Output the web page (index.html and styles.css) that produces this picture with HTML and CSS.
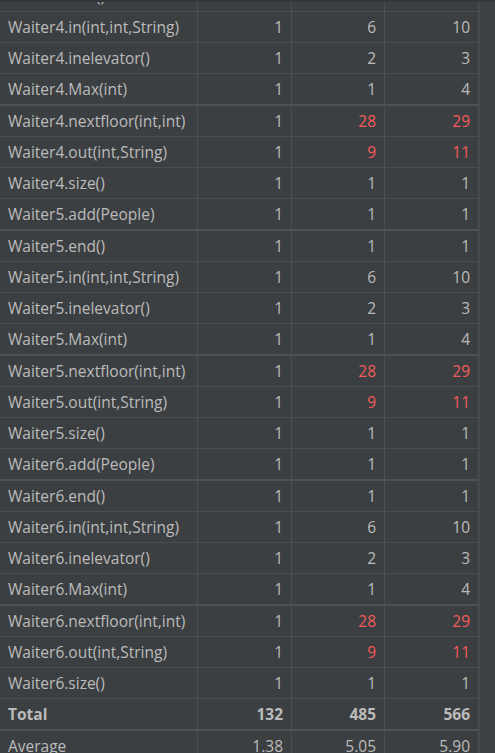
FILE: index.html
```html
<!DOCTYPE html>
<html>
<head>
<meta charset="utf-8">
<link rel="stylesheet" href="styles.css">
</head>
<body>
<div class="view">
  <div class="grid">
    <div class="table">
      <div class="row"><div class="c name">Waiter4.end()</div><div class="c num">1</div><div class="c num">1</div><div class="c num">1</div></div>
      <div class="row"><div class="c name">Waiter4.in(int,int,String)</div><div class="c num">1</div><div class="c num">6</div><div class="c num">10</div></div>
      <div class="row"><div class="c name">Waiter4.inelevator()</div><div class="c num">1</div><div class="c num">2</div><div class="c num">3</div></div>
      <div class="row thick"><div class="c name">Waiter4.Max(int)</div><div class="c num">1</div><div class="c num">1</div><div class="c num">4</div></div>
      <div class="row"><div class="c name">Waiter4.nextfloor(int,int)</div><div class="c num">1</div><div class="c num red">28</div><div class="c num red">29</div></div>
      <div class="row"><div class="c name">Waiter4.out(int,String)</div><div class="c num">1</div><div class="c num red">9</div><div class="c num red">11</div></div>
      <div class="row"><div class="c name">Waiter4.size()</div><div class="c num">1</div><div class="c num">1</div><div class="c num">1</div></div>
      <div class="row thick"><div class="c name">Waiter5.add(People)</div><div class="c num">1</div><div class="c num">1</div><div class="c num">1</div></div>
      <div class="row"><div class="c name">Waiter5.end()</div><div class="c num">1</div><div class="c num">1</div><div class="c num">1</div></div>
      <div class="row"><div class="c name">Waiter5.in(int,int,String)</div><div class="c num">1</div><div class="c num">6</div><div class="c num">10</div></div>
      <div class="row"><div class="c name">Waiter5.inelevator()</div><div class="c num">1</div><div class="c num">2</div><div class="c num">3</div></div>
      <div class="row thick"><div class="c name">Waiter5.Max(int)</div><div class="c num">1</div><div class="c num">1</div><div class="c num">4</div></div>
      <div class="row"><div class="c name">Waiter5.nextfloor(int,int)</div><div class="c num">1</div><div class="c num red">28</div><div class="c num red">29</div></div>
      <div class="row"><div class="c name">Waiter5.out(int,String)</div><div class="c num">1</div><div class="c num red">9</div><div class="c num red">11</div></div>
      <div class="row"><div class="c name">Waiter5.size()</div><div class="c num">1</div><div class="c num">1</div><div class="c num">1</div></div>
      <div class="row thick"><div class="c name">Waiter6.add(People)</div><div class="c num">1</div><div class="c num">1</div><div class="c num">1</div></div>
      <div class="row"><div class="c name">Waiter6.end()</div><div class="c num">1</div><div class="c num">1</div><div class="c num">1</div></div>
      <div class="row"><div class="c name">Waiter6.in(int,int,String)</div><div class="c num">1</div><div class="c num">6</div><div class="c num">10</div></div>
      <div class="row"><div class="c name">Waiter6.inelevator()</div><div class="c num">1</div><div class="c num">2</div><div class="c num">3</div></div>
      <div class="row thick"><div class="c name">Waiter6.Max(int)</div><div class="c num">1</div><div class="c num">1</div><div class="c num">4</div></div>
      <div class="row"><div class="c name">Waiter6.nextfloor(int,int)</div><div class="c num">1</div><div class="c num red">28</div><div class="c num red">29</div></div>
      <div class="row"><div class="c name">Waiter6.out(int,String)</div><div class="c num">1</div><div class="c num red">9</div><div class="c num red">11</div></div>
      <div class="row"><div class="c name">Waiter6.size()</div><div class="c num">1</div><div class="c num">1</div><div class="c num">1</div></div>
      <div class="row thick bold"><div class="c name">Total</div><div class="c num">132</div><div class="c num">485</div><div class="c num">566</div></div>
      <div class="row"><div class="c name">Average</div><div class="c num">1.38</div><div class="c num">5.05</div><div class="c num">5.90</div></div>
    </div>
    <div class="scroll"></div>
  </div>
</div>
</body>
</html>
```

FILE: styles.css
```css
html, body {
  margin: 0;
  padding: 0;
  background: #3c3f41;
}
body {
  width: 495px;
  height: 753px;
  overflow: hidden;
  font-family: "Open Sans", "Noto Sans", sans-serif;
  font-size: 15.5px;
  color: #bbbbbb;
}
.view {
  height: 751px;
  border-top: 2px solid #333537;
  overflow: hidden;
}
.grid {
  display: flex;
  height: 100%;
}
.table {
  width: 479px;
  margin-top: -21px;
}
.scroll {
  width: 16px;
  background: #3e4143;
  border-left: 1px solid #45484a;
}
.row {
  display: grid;
  grid-template-columns: 198px 94px 93px 94px;
  height: 30px;
  border-bottom: 1px solid #4b4e50;
}
.row.thick {
  border-bottom: 2px solid #4f5254;
}
.c {
  border-right: 1px solid #4b4e50;
  line-height: 30px;
  white-space: nowrap;
  overflow: hidden;
}
.name {
  padding-left: 8px;
}
.num {
  text-align: right;
  padding-right: 8px;
}
.red {
  color: #f25b5b;
}
.bold .c {
  font-weight: bold;
}
```
